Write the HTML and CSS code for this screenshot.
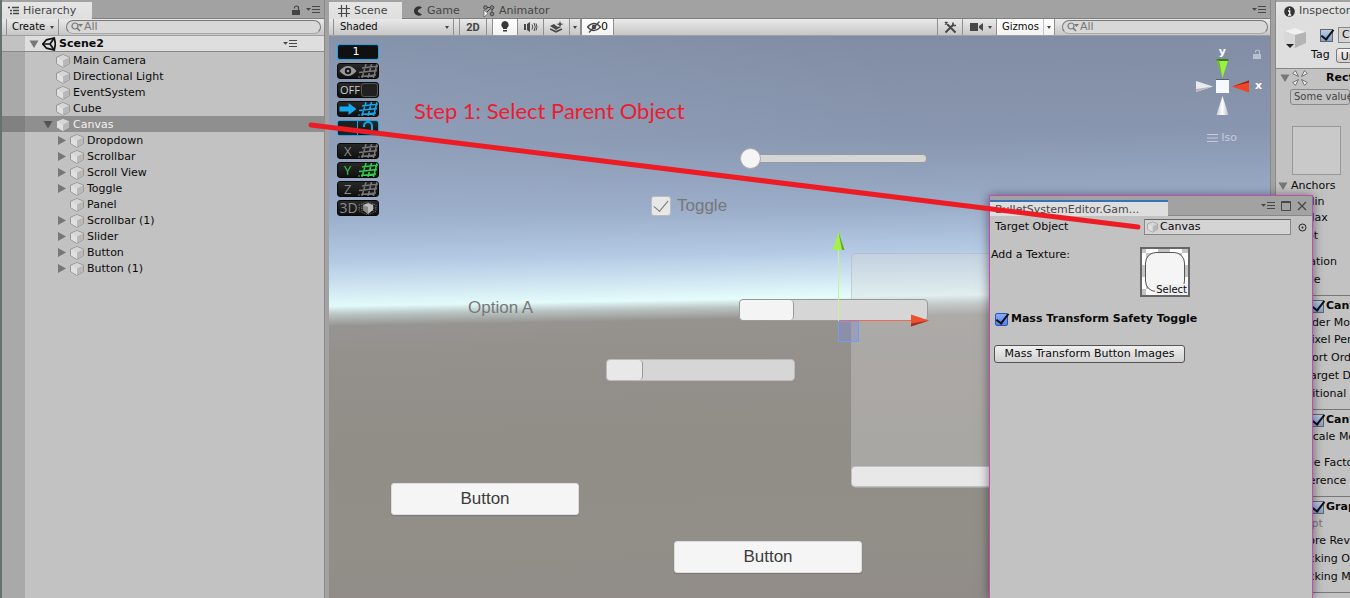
FILE: index.html
```html
<!DOCTYPE html>
<html lang="en">
<head>
<meta charset="utf-8">
<title>Scene2 - Editor</title>
<link rel="stylesheet" href="styles.css">
</head>
<body>
<svg class="defs" aria-hidden="true">
  <defs>
    <linearGradient id="gl" x1="0" y1="0" x2="1" y2="1"><stop offset="0" stop-color="#c4c4c4"/><stop offset="1" stop-color="#e4e4e4"/></linearGradient>
    <linearGradient id="gcone" x1="0" x2="1"><stop offset="0" stop-color="#c8cbd2"/><stop offset=".5" stop-color="#fff"/><stop offset="1" stop-color="#b4b8c0"/></linearGradient>
    <symbol id="cube" viewBox="0 0 14 14">
      <path d="M7 .6 13.4 3.2V9.6L7 13.4.6 9.6V3.2z" fill="url(#gl)" stroke="#8c8c8c" stroke-width=".9"/>
      <path d="M1 3.400 7 1 13 3.400 7 6.400z" fill="#d6d6d6"/>
      <path d="M7 6.400 13 3.400v6L7 13z" fill="#b8b8b8"/>
      <path d="M1 3.400 7 6.400V13L1 9.400z" fill="#e0e0e0"/>
    </symbol>
    <symbol id="menu" viewBox="0 0 14 8">
      <path d="M0 2h5L2.500 4.700z" fill="#484848"/><path d="M6 .5h8M6 3.500h8M6 6.500h8" stroke="#484848"/>
    </symbol>
    <symbol id="lens" viewBox="0 0 12 10">
      <circle cx="4" cy="4" r="3" fill="none" stroke="#777" stroke-width="1.200"/><path d="M6 6l3 3" stroke="#777" stroke-width="1.600"/><path d="M7 2h5L9.500 5z" fill="#777"/>
    </symbol>
    <symbol id="grid" viewBox="0 0 20 14">
      <path d="M4 4 20 2M1 8.500 19 6.500M3 12.500 18 11M8 0 4 14M13.500 0 10 14M19 0 15.500 14" fill="none" stroke="currentColor" stroke-width="1.500"/><path d="M0 13h2" stroke="currentColor"/>
    </symbol>
    <symbol id="lock" viewBox="0 0 8 10">
      <path d="M0 5h8v5H0z" fill="currentColor"/><path d="M2.500 3.500V2.500Q2.500 1 4.500 1T6.500 3V5" fill="none" stroke="currentColor" stroke-width="1.200"/>
    </symbol>
  </defs>
</svg>
<main class="editor">
  <section class="panel hierarchy">
    <header class="tabs">
      <div class="tab active">
        <svg width="12" height="10" viewBox="0 0 12 10"><path d="M0 1.500h2M4 1.500h7M2 4.500h2M5 4.500h6M2 7.500h2M5 7.500h6" stroke="#484848" stroke-width="1.300"/></svg>Hierarchy
      </div>
      <div class="tab-tools">
        <svg class="dark" width="8" height="10"><use href="#lock"/></svg>
        <svg width="14" height="8"><use href="#menu"/></svg>
      </div>
    </header>
    <div class="toolbar">
      <span class="inset"></span>
      <button class="tool create">Create <i class="caret"></i></button>
      <label class="search"><svg width="12" height="10"><use href="#lens"/></svg><input type="text" placeholder="All" aria-label="Search hierarchy"></label>
    </div>
    <div class="tree">
      <div class="row scene-row">
        <i class="down"></i>
        <svg width="14" height="14" viewBox="0 0 14 14"><path d="M.8 7 4.500 2.800 12.300 1 13.400 7 12.300 13 4.500 11.200z" fill="none" stroke="#111" stroke-width="1.700"/><path d="M1 7h7M8 7l3.800-5.500M8 7l3.800 5.500" stroke="#111" stroke-width="1.700"/></svg>
        <strong>Scene2</strong>
        <svg class="row-menu" width="14" height="8"><use href="#menu"/></svg>
      </div>
      <div class="row"><i></i><svg class="cube"><use href="#cube"/></svg>Main Camera</div>
      <div class="row"><i></i><svg class="cube"><use href="#cube"/></svg>Directional Light</div>
      <div class="row"><i></i><svg class="cube"><use href="#cube"/></svg>EventSystem</div>
      <div class="row"><i></i><svg class="cube"><use href="#cube"/></svg>Cube</div>
      <div class="row selected"><i class="down"></i><svg class="cube"><use href="#cube"/></svg>Canvas</div>
      <div class="row child"><i class="right"></i><svg class="cube"><use href="#cube"/></svg>Dropdown</div>
      <div class="row child"><i class="right"></i><svg class="cube"><use href="#cube"/></svg>Scrollbar</div>
      <div class="row child"><i class="right"></i><svg class="cube"><use href="#cube"/></svg>Scroll View</div>
      <div class="row child"><i class="right"></i><svg class="cube"><use href="#cube"/></svg>Toggle</div>
      <div class="row child"><i></i><svg class="cube"><use href="#cube"/></svg>Panel</div>
      <div class="row child"><i class="right"></i><svg class="cube"><use href="#cube"/></svg>Scrollbar (1)</div>
      <div class="row child"><i class="right"></i><svg class="cube"><use href="#cube"/></svg>Slider</div>
      <div class="row child"><i class="right"></i><svg class="cube"><use href="#cube"/></svg>Button</div>
      <div class="row child"><i class="right"></i><svg class="cube"><use href="#cube"/></svg>Button (1)</div>
    </div>
  </section>

  <section class="panel scene">
    <header class="tabs">
      <div class="tab active scene-tab"><svg width="12" height="12" viewBox="0 0 12 12"><path d="M3.500 0v12M8.500 0v12M0 3.500h12M0 8.500h12" stroke="#484848" stroke-width="1.200"/></svg>Scene</div>
      <div class="tab game-tab"><svg width="10" height="10" viewBox="0 0 10 10"><path d="M9 1.500A4.800 4.800 0 1 0 9 8.500L5 6V4z" fill="#333"/></svg>Game</div>
      <div class="tab"><svg width="12" height="12" viewBox="0 0 12 12"><g fill="#888" stroke="#444"><circle cx="2.500" cy="2.500" r="1.800"/><circle cx="9" cy="2.500" r="1.800"/><circle cx="9" cy="9" r="1.800"/></g><path d="M4 2.500h3M9 4v3M4 7l3-3" stroke="#444"/><path d="M1 5v7l4-3.500z" fill="#fff" stroke="#444" stroke-width=".6"/></svg>Animator</div>
      <div class="tab-tools"><svg width="14" height="8"><use href="#menu"/></svg></div>
    </header>
    <div class="toolbar">
      <span class="inset"></span>
      <button class="tool shaded">Shaded <i class="caret"></i></button>
      <span class="space-s"></span>
      <button class="tool two-d">2D</button>
      <span class="space-s"></span>
      <button class="tool icon on" aria-label="Lighting"><svg width="10" height="14" viewBox="0 0 10 14"><path d="M5 1a4 4 0 0 1 2 7.300V9H3v-.700A4 4 0 0 1 5 1zM3 10h4v1.500H3z" fill="#383838"/></svg></button>
      <button class="tool icon" aria-label="Audio"><svg width="14" height="12" viewBox="0 0 14 12"><path d="M0 3h2v6H0zM3 3l3-2v10L3 9z" fill="#484848"/><path d="M8 3.500q1.500 2.500 0 5M10 2q2.500 4 0 8M12 2.500q2 3.500 0 7" fill="none" stroke="#484848"/></svg></button>
      <button class="tool icon" aria-label="Effects"><svg width="14" height="12" viewBox="0 0 14 12"><path d="M0 5 4 3l3 2.500 4 .500-5 3z" fill="#484848"/><path d="M0 8l6 2.800L12 8" fill="none" stroke="#484848" stroke-width="1.500"/><path d="M10 0l1 2.500L13.500 3 11 4l-1 2.500L9 4 6.500 3 9 2.500z" fill="#484848"/></svg></button>
      <button class="tool drop" aria-label="Effects menu"><i class="caret"></i></button>
      <button class="tool hidden on"><svg width="14" height="12" viewBox="0 0 14 12"><path d="M.5 6Q7-1 13.500 6 7 13 .5 6z" fill="none" stroke="#484848" stroke-width="1.300"/><circle cx="7" cy="6" r="2.300" fill="#484848"/><path d="M2 11.500 12.500.5" stroke="#484848" stroke-width="1.300"/></svg>0</button>
      <span class="grow"></span>
      <button class="tool icon left-line" aria-label="Tools"><svg width="13" height="13" viewBox="0 0 13 13"><path d="M3.500 3.500l8 8M1.500 11.500l8-8" stroke="#484848" stroke-width="2"/><path d="M1 3.500 3.500 1M1 1l3 3M9 1.500v3h3" fill="none" stroke="#484848" stroke-width="1.600"/></svg></button>
      <button class="tool cam" aria-label="Camera"><svg width="13" height="8" viewBox="0 0 13 8"><path d="M0 0h8v8H0zM9 3l4-3v8L9 5z" fill="#484848"/></svg><i class="caret"></i></button>
      <button class="tool gizmos on">Gizmos</button><button class="tool drop on" aria-label="Gizmos menu"><i class="caret"></i></button>
      <label class="search scene-search"><svg width="12" height="10"><use href="#lens"/></svg><input type="text" placeholder="All" aria-label="Search scene"></label>
    </div>
    <div class="view">
      <div class="snap">
        <button class="key cyan-edge">1</button>
        <button class="key" aria-label="Show grid"><svg width="20" height="12" viewBox="0 0 19 12"><path d="M1 6Q9.500-4 18 6 9.500 16 1 6z" fill="#999"/><circle cx="9.500" cy="6" r="3.200" fill="#151515"/><circle cx="9.500" cy="6" r="1.300" fill="#999"/></svg><svg class="g"><use href="#grid"/></svg></button>
        <button class="key off"><span>OFF</span><b></b></button>
        <button class="key cyan" aria-label="Push to grid"><svg width="20" height="12" viewBox="0 0 19 12"><path d="M1 3.500h9V0l8 6-8 6V8.500H1z" fill="#14a8ec"/></svg><svg class="g"><use href="#grid"/></svg></button>
        <button class="key cyan cyan-edge split" aria-label="Follow grid"><b></b><svg width="12" height="14" viewBox="0 0 12 14"><path d="M2 6V5a4 4 0 0 1 8 0v4" fill="none" stroke="#14a8ec" stroke-width="2"/><path d="M5 9h6v4H5z" fill="#14a8ec"/></svg></button>
        <span></span>
        <button class="key axis">X<svg class="g"><use href="#grid"/></svg></button>
        <button class="key axis green">Y<svg class="g"><use href="#grid"/></svg></button>
        <button class="key axis">Z<svg class="g"><use href="#grid"/></svg></button>
        <button class="key three">3D<svg width="19" height="14" viewBox="0 0 19 14"><path d="M1 4 9 1l9 3v6l-8 4-9-4zM1 7h17M4 3v8M15 3v8" fill="none" stroke="#777" stroke-dasharray="1 1"/><path d="M5 4l5-2 5 2v5l-5 4-5-4z" fill="#bbb"/><path d="M5 4l5 2v7L5 9z" fill="#888"/></svg></button>
      </div>
      <p class="step">Step 1: Select Parent Object</p>
      <div class="canvas-panel"></div>
      <div class="canvas-scroll"></div>
      <input class="ui-slider" type="range" value="0" aria-label="Slider">
      <label class="ui-toggle"><input type="checkbox" checked>Toggle</label>
      <span class="ui-option">Option A</span>
      <div class="ui-bar bar-a"><b></b></div>
      <div class="ui-bar bar-b"><b></b></div>
      <button class="ui-button button-a">Button</button>
      <button class="ui-button button-b">Button</button>
      <svg class="move" width="94" height="112" viewBox="0 0 94 112" aria-hidden="true">
        <rect x="3.500" y="89.500" width="20" height="20" fill="#7c86e0" fill-opacity=".3" stroke="#6f9df5"/>
        <path d="M3.500 89V18" stroke="#c4f783"/><path d="M4 88.500h74" stroke="#ee6a50"/>
        <path d="M3.500 0 9.500 18h-12z" fill="#a5ef4e"/><path d="M3.500 0 9.500 18H7z" fill="#66a332"/>
        <path d="M94 88.500 76 82.500v12z" fill="#f0502e"/><path d="M94 88.500 76 94.500v-3z" fill="#9b3524"/>
      </svg>
      <svg class="compass" width="72" height="80" viewBox="0 0 72 80" aria-hidden="true">
        <path d="M21.500 14h12L27.500 33z" fill="#97f33f"/><path d="M21.500 14h12v2h-12z" fill="#3e7820"/><path d="M22 15l5.500 18L24 15z" fill="#66ac2e"/>
        <path d="M1 36v11l17-5.500z" fill="#e8eaee"/><path d="M1 44v3l17-5.500z" fill="#b4b8c0"/>
        <path d="M54 35.500v12l-17-6z" fill="#f04426"/><path d="M54 35.500v2l-17 4z" fill="#8e291a"/>
        <path d="M27.500 51 33.500 70h-12z" fill="url(#gcone)"/><path d="M21 35h13v13H21z" fill="#f7f8fb"/><path d="M21 34.500h13" stroke="#555c6b"/>
      </svg>
      <b class="axis-y">y</b><b class="axis-x">x</b>
      <svg class="view-lock" width="8" height="10"><use href="#lock"/></svg>
      <span class="iso"><svg width="11" height="8" viewBox="0 0 11 8"><path d="M0 .5h11M0 4h11M0 7.500h11" stroke="#c5ccd8"/></svg>Iso</span>
    </div>
  </section>

  <section class="panel inspector">
    <header class="tabs"><div class="tab active info-tab"><svg width="11" height="11" viewBox="0 0 11 11"><circle cx="5.500" cy="5.500" r="5.300" fill="#333"/><path d="M5.500 2v1.600M4 5h1.700v4M4 9h3.200" stroke="#fff" stroke-width="1.300" fill="none"/></svg>Inspector</div></header>
    <div class="object">
      <svg width="24" height="24" viewBox="0 0 24 24"><path d="M1 4 12 1l11 4v11l-11 5L2 16z" fill="#d0d0d0"/><path d="M1 4 12 1l11 4-11 3z" fill="#f0f0f0"/><path d="M1 4l11 4v13L2 16z" fill="#d8d8d8"/><path d="M12 8l11-3v11l-11 5z" fill="#b4b4b4"/><path d="M3 17h8l-4 4z" fill="#222"/></svg>
      <div class="object-fields">
        <div><input class="check" type="checkbox" checked aria-label="Active"><input class="name" type="text" value="Canvas" aria-label="Name"></div>
        <div><label for="tag">Tag</label><select id="tag" class="tag"><option>Untagged</option></select></div>
      </div>
    </div>
    <div class="rect-head"><i class="down"></i><svg width="16" height="16" viewBox="0 0 16 16"><g fill="#f2f2f2" stroke="#666" stroke-width=".9"><path d="M.7 3.500 3.500.7 6.500 6.500zM15.300 3.500 12.500.7 9.500 6.500zM.7 12.500l2.800 2.800 3-5.800zM15.300 12.500l-2.800 2.800-3-5.800z"/></g></svg><strong>Rect Transform</strong></div>
    <div class="note">Some values driven by Canvas.</div>
    <div class="anchor-box"></div>
    <div class="prop short anchors"><i class="down"></i>Anchors</div>
    <div class="prop short sub">Min</div>
    <div class="prop short sub">Max</div>
    <div class="prop pivot">Pivot</div>
    <div class="prop spaced">Rotation</div>
    <div class="prop">Scale</div>
    <div class="comp"><label><input class="check" type="checkbox" checked>Canvas</label></div>
    <div class="prop first">Render Mode</div>
    <div class="prop sub">Pixel Perfect</div>
    <div class="prop sub">Sort Order</div>
    <div class="prop sub">Target Display</div>
    <div class="prop">Additional Shader</div>
    <div class="comp"><label><input class="check" type="checkbox" checked>Canvas Scaler</label></div>
    <div class="prop first">UI Scale Mode</div>
    <div class="prop spaced">Scale Factor</div>
    <div class="prop">Reference Pixels</div>
    <div class="comp"><label><input class="check" type="checkbox" checked>Graphic Raycaster</label></div>
    <div class="prop first muted">Script</div>
    <div class="prop">Ignore Reversed</div>
    <div class="prop">Blocking Objects</div>
    <div class="prop">Blocking Mask</div>
    <div class="comp"></div>
  </section>

  <section class="window">
    <header class="window-bar">
      <div class="window-tab">BulletSystemEditor.Gam...</div>
      <div class="window-tools">
        <svg width="14" height="8"><use href="#menu"/></svg>
        <svg width="10" height="10" viewBox="0 0 10 10"><path d="M.5.5h9v9h-9zM0 1.500h10" fill="none" stroke="#484848"/></svg>
        <svg width="10" height="10" viewBox="0 0 10 10"><path d="M1 1l8 8M9 1 1 9" stroke="#484848" stroke-width="1.400"/></svg>
      </div>
    </header>
    <div class="window-body">
      <div class="field-row">
        <span>Target Object</span>
        <div class="object-field"><svg width="11" height="12"><use href="#cube"/></svg>Canvas</div>
        <svg width="9" height="9" viewBox="0 0 9 9"><circle cx="4.500" cy="4.500" r="3.500" fill="none" stroke="#222"/><circle cx="4.500" cy="4.500" r="1" fill="#222"/></svg>
      </div>
      <div class="texture-row">
        <span>Add a Texture:</span>
        <div class="texture"><div class="sprite"></div><button class="select">Select</button></div>
      </div>
      <label class="safety"><input class="check focus" type="checkbox" checked>Mass Transform Safety Toggle</label>
      <button class="mass">Mass Transform Button Images</button>
    </div>
  </section>
  <svg class="pointer" width="840" height="116" viewBox="0 0 840 116" aria-hidden="true"><path d="M4 7 831 109" stroke="#ed1c24" stroke-width="5" stroke-linecap="round"/></svg>
</main>
</body>
</html>
```
FILE: styles.css
```css
* { box-sizing: border-box; }
body {
  margin: 0;
  font: 11px/16px "DejaVu Sans", Verdana, sans-serif;
  color: #0a0a0a;
  background: #a2a2a2;
}
button, input, select { font: inherit; color: inherit; margin: 0; }
button { padding: 0; border: 0; background: none; }
svg { display: block; flex: none; }
.defs { position: absolute; width: 0; height: 0; }

.editor {
  position: relative;
  display: grid;
  grid-template-columns: 325px 1fr 75px;
  gap: 4px;
  height: 100vh;
  overflow: hidden;
}
.panel { display: flex; flex-direction: column; min-width: 0; overflow: hidden; background: #c2c2c2; }
.hierarchy { border-left: 2px solid #66706f; border-right: 1px solid #8a8a8a; }
.inspector { border-left: 1px solid #8a8a8a; }
.scene { border-right: 1px solid #8a8a8a; }

/* tabs */
.tabs { display: flex; flex: none; height: 19px; padding-top: 2px; background: #a2a2a2; border-bottom: 1px solid #7f7f7f; }
.tab { display: flex; align-items: center; gap: 4px; padding: 1px 12px 0; color: #454545; }
.tab.active { background: linear-gradient(#e6e6e6, #dedede); margin-bottom: -1px; }
.hierarchy .tab { width: 90px; padding: 1px 7px 0 6px; gap: 3px; }
.scene-tab { width: 73px; padding: 1px 9px 0; }
.game-tab { padding: 1px 0 0 11px; width: 69px; }
.info-tab { width: 100%; padding: 1px 8px 0; }
.tab-tools { display: flex; align-items: center; gap: 6px; margin-left: auto; padding-right: 4px; }
.dark { color: #444; }

/* toolbars */
.toolbar { display: flex; flex: none; height: 17px; background: linear-gradient(#eaeaea, #c6c6c6); border-bottom: 1px solid #a0a0a0; }
.inset { width: 4px; }
.space-s { width: 5px; }
.grow { flex: 1; }
.tool { display: flex; align-items: center; justify-content: space-between; border-right: 1px solid #8f8f8f; white-space: nowrap; }
.tool.on { background: linear-gradient(#fff, #f2f2f2); }
.caret { width: 0; height: 0; border: 2px solid transparent; border-top: 3px solid #444; border-bottom: 0; }
.create { width: 53px; padding: 0 4px 0 5px; border-left: 1px solid #8f8f8f; font-size: 10px; }
.shaded { width: 121px; padding: 0 4px 0 6px; border-left: 1px solid #8f8f8f; font-size: 10px; }
.two-d { width: 28px; justify-content: center; border-left: 1px solid #8f8f8f; font: bold 11px "Roboto", sans-serif; color: #444; }
.icon { width: 26px; justify-content: center; }
.space-s + .icon, .left-line { border-left: 1px solid #8f8f8f; }
.drop { width: 11px; justify-content: center; }
.hidden { width: 33px; padding: 0 5px; border-left: 1px solid #8f8f8f; }
.cam { width: 34px; padding: 0 4px 0 7px; }
.gizmos { width: 47px; padding: 0 5px; font-size: 10px; border-right-color: #c4c4c4; }
.search {
  display: flex; align-items: center; gap: 1px; flex: 1;
  height: 14px; margin: 1px 3px 0 7px; padding: 0 5px 0 4px;
  border: 1px solid #777; border-bottom-color: #aaa; border-radius: 8px; background: #d8d8d8;
}
.search input { flex: 1; min-width: 0; width: 20px; height: 12px; padding: 0; border: 0; outline: 0; background: none; }
.search input::placeholder { color: #777; opacity: 1; }
.scene-search { flex: none; width: 206px; margin-right: 2px; }

/* hierarchy */
.tree { flex: 1; background: linear-gradient(to right, #a9a9a9 23px, #c2c2c2 23px); }
.row { display: flex; align-items: center; gap: 3px; height: 16px; padding: 1px 0 0 41px; }
.row > i { flex: none; width: 10px; }
.child { padding-left: 55px; }
.cube { width: 14px; height: 14px; }
.scene-row { padding: 1px 27px 0 27px; background: linear-gradient(to right, #c2c2c2 23px, #dedede 23px); border-bottom: 1px solid #888; }
.row-menu { margin-left: auto; }
.selected { color: #f2f2f2; background: linear-gradient(to right, #818181 23px, #8f8f8f 23px); }
.down, .right { display: block; flex: none; width: 10px; height: 9px; background: #777; }
.down { clip-path: polygon(5% 10%, 95% 10%, 50% 95%); }
.right { clip-path: polygon(10% 0, 90% 50%, 10% 100%); }
.selected .down { background: #555; }

/* scene canvas */
.view {
  position: relative; flex: 1; overflow: hidden;
  background:
    radial-gradient(ellipse 600px 220px at 0 100px, #a8c0e038, #a8c0e000),
    linear-gradient(179deg, #808ca3 0, #8996af 110px, #9aacc8 180px, #b4cae4 224px, #d0e6f2 250px, #e6fdfc 270px, #b8c2c0 279px, #96938f 290px, #938f8b 340px, #918e87 420px, #928f88 500px, #918c88 570px);
}
.snap { position: absolute; left: 8px; top: 8px; display: flex; flex-direction: column; gap: 3px; width: 42px; }
.snap > span { height: 1px; }
.key {
  display: flex; align-items: center; justify-content: center; height: 16px; overflow: hidden;
  border: 1px solid #080808; border-radius: 3px; background: linear-gradient(#282828, #101010); color: #8c8c8c;
}
.key:first-child { color: #fff; background: #101010; padding-right: 4px; }
.key .g { width: 20px; height: 14px; color: #777; }
.key.cyan .g { color: #14a8ec; }
.key.cyan-edge { border-color: #14a8ec; }
.key.off { justify-content: space-between; padding-left: 2px; color: #ccc; font: 11px/14px "Open Sans", sans-serif; }
.off b { width: 17px; height: 14px; border: 1px solid #555; border-radius: 3px; background: #202020; }
.key.split { justify-content: space-between; padding-right: 4px; }
.split b { width: 20px; height: 14px; border-right: 1px solid #14a8ec; background: #202020; }
.key.axis { justify-content: space-between; padding-left: 6px; font: 13px/14px "Open Sans", sans-serif; }
.key.green, .key.green .g { color: #33cf4c; }
.key.three { font: 14px/14px "Open Sans", sans-serif; }
.step { position: absolute; left: 85px; top: 62px; margin: 0; font: 22px/26px Lato, sans-serif; color: #ed1c30; white-space: nowrap; }
.canvas-panel { position: absolute; left: 522px; top: 217px; width: 230px; height: 235px; border: 1px solid #9aa6ac60; border-radius: 5px; background: #d6d6d65c; }
.canvas-scroll { position: absolute; left: 522px; top: 430px; width: 230px; height: 21px; border: 1px solid #c0c0c0; border-radius: 4px; background: #e8e8e8; }
.ui-slider { position: absolute; left: 410px; top: 111px; width: 188px; height: 22px; appearance: none; background: none; }
.ui-slider::-webkit-slider-runnable-track { height: 9px; border: 1px solid #9a9a9a; border-radius: 4px; background: #d6d6d6; }
.ui-slider::-webkit-slider-thumb { appearance: none; width: 21px; height: 21px; margin-top: -7px; border: 1px solid #aaa; border-radius: 50%; background: #f5f5f5; }
.ui-toggle { position: absolute; left: 322px; top: 160px; display: flex; align-items: center; gap: 6px; font: 17px/20px "Liberation Sans", sans-serif; color: #777; }
.ui-toggle input { appearance: none; width: 20px; height: 20px; border: 1px solid #bbb; border-radius: 3px; background: #e8e8e8; display: grid; place-items: center; }
.ui-toggle input::before { content: ""; width: 13px; height: 7px; border: solid #777; border-width: 0 0 1px 1px; transform: rotate(-50deg); margin-bottom: 4px; }
.ui-option { position: absolute; left: 139px; top: 262px; font: 17px/20px "Liberation Sans", sans-serif; color: #777; }
.ui-bar { position: absolute; width: 189px; height: 22px; border: 1px solid #999; border-radius: 4px; background: #d6d6d6; }
.ui-bar b { display: block; height: 20px; border-right: 1px solid #999; border-radius: 4px; background: #f4f4f4; }
.bar-a { left: 410px; top: 263px; }
.bar-a b { width: 54px; }
.bar-b { left: 277px; top: 323px; border-color: #bbb; }
.bar-b b { width: 36px; background: #e8e8e8; }
.ui-button { position: absolute; width: 188px; height: 32px; border: 1px solid #ddd; border-radius: 3px; background: #f5f5f5; box-shadow: 0 1px 1px #66666680; font: 17px/20px "Liberation Sans", sans-serif; color: #3c3c3c; }
.button-a { left: 62px; top: 447px; }
.button-b { left: 345px; top: 505px; }
.move { position: absolute; left: 506px; top: 196px; overflow: visible; }
.compass { position: absolute; right: 3px; top: 9px; }
.axis-y { position: absolute; right: 44px; top: 8px; color: #fff; }
.axis-x { position: absolute; right: 8px; top: 42px; color: #fff; }
.view-lock { position: absolute; right: 9px; top: 13px; color: #b9c1cd; }
.iso { position: absolute; right: 33px; top: 94px; display: flex; align-items: center; gap: 3px; color: #c5ccd8; }

/* inspector */
.inspector > * { flex: none; white-space: nowrap; }
.object { display: flex; gap: 4px; height: 50px; padding: 8px 0 0 7px; background: #dedede; border-bottom: 1px solid #888; }
.object-fields { display: grid; align-content: start; gap: 4px; }
.object-fields > div { display: flex; align-items: center; height: 16px; gap: 6px; }
.object-fields > div:first-child { padding-left: 9px; gap: 5px; }
.name { width: 150px; height: 16px; padding: 0 3px; border: 1px solid #888; background: #d4d4d4; }
.tag { width: 120px; height: 15px; padding: 0 4px; appearance: none; border: 1px solid #777; border-radius: 3px; background: linear-gradient(#f4f4f4, #d0d0d0); }
.check { appearance: none; flex: none; width: 13px; height: 13px; border: 1px solid #666; background: linear-gradient(#b9cce8, #7f9fd0); display: grid; place-items: center; }
.check::before { content: ""; width: 11px; height: 5px; border: solid #101010; border-width: 0 0 2px 2px; transform: rotate(-52deg); margin-bottom: 5px; }
.check.focus { border-color: #2c50c0; border-radius: 2px; background: linear-gradient(#86acf4, #5283e4); }
.rect-head { display: flex; align-items: center; height: 18px; gap: 2px; padding-left: 4px; }
.rect-head strong { padding-left: 16px; }
.note { height: 16px; margin: 2px 0 0 14px; padding: 0 3px; line-height: 14px; font-size: 10px; color: #444; border: 1px solid #888; border-radius: 3px; }
.anchor-box { width: 49px; height: 49px; margin: 21px 0 3px 16px; border: 1px solid #999; background: #c9c9c9; }
.prop { height: 18px; padding-left: 15px; line-height: 18px; }
.short { height: 16px; line-height: 16px; }
.sub { padding-left: 29px; }
.anchors { display: flex; align-items: center; gap: 3px; padding-left: 2px; }
.pivot { margin-top: 1px; }
.first { height: 17px; line-height: 17px; }
.spaced { margin-top: 8px; }
.comp { height: 19px; margin-top: 6px; padding: 2px 0 0 35px; border-top: 1px solid #777; font-weight: bold; }
.first + .spaced { margin-top: 9px; }
.comp label { display: flex; align-items: center; gap: 2px; }
.muted { color: #777; }

/* floating editor window */
.window {
  position: absolute; right: 37px; top: 195px; bottom: 0; width: 324px;
  display: flex; flex-direction: column;
  border: solid #c44bb0; border-width: 1px 1px 0; background: #c2c2c2; box-shadow: 0 1px 10px #00000080;
}
.window-bar { display: flex; height: 20px; background: #a2a2a2; border-bottom: 1px solid #888; }
.window-tab { width: 178px; margin: 4px 0 -1px; padding-left: 5px; border-top: 2px solid #3a72b8; background: #dedede; color: #484848; line-height: 15px; }
.window-tools { display: flex; align-items: center; gap: 6px; margin-left: auto; padding-right: 5px; }
.window-body { display: flex; flex-direction: column; align-items: flex-start; padding-top: 3px; }
.field-row { display: grid; grid-template-columns: 149px 1fr 9px; align-items: center; width: 100%; height: 16px; padding: 0 5px; }
.object-field { display: flex; align-items: center; gap: 2px; height: 16px; margin-right: 7px; padding-left: 2px; border: 1px solid #888; border-top-color: #666; background: #d4d4d4; }
.texture-row { display: grid; grid-template-columns: 149px 50px; margin-top: 12px; padding-left: 1px; }
.texture { position: relative; height: 50px; padding: 3px; border: 2px solid #666; background: repeating-conic-gradient(#fff 0 25%, #c4c4c4 0 50%) 4px 4px / 24px 24px; }
.sprite { height: 40px; border: 1px solid #555; border-radius: 11px; background: #f5f5f5; }
.select { position: absolute; right: 0; bottom: 0; padding: 0 1px; height: 11px; background: #f0f0f0; font-size: 10px; line-height: 11px; }
.safety { display: flex; align-items: center; gap: 3px; height: 16px; margin: 14px 0 0 5px; font-weight: bold; }
.mass { min-width: 191px; height: 18px; margin: 18px 0 0 4px; padding: 0 4px; border: 1px solid #555; border-radius: 3px; background: linear-gradient(#f0f0f0, #d0d0d0); line-height: 16px; }
.pointer { position: absolute; left: 307px; top: 118px; }
```
